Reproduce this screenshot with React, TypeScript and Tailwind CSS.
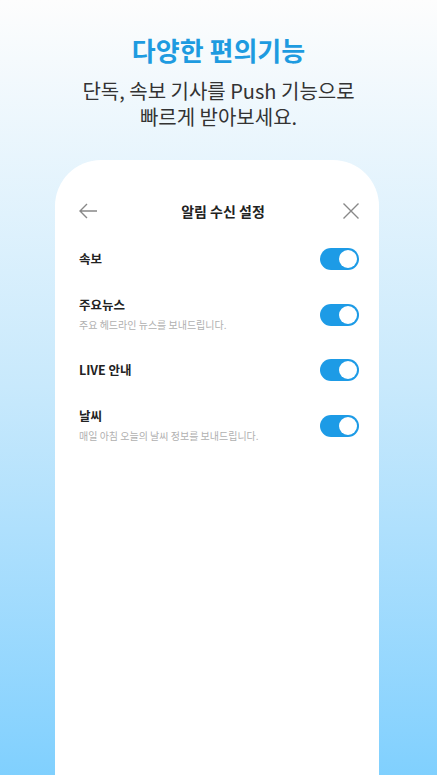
import React from "react";

const Toggle = () => (
  <div className="w-[39px] h-[22px] rounded-full bg-[#1d9be6] flex items-center justify-end pr-[2px] shrink-0">
    <div className="w-[18px] h-[18px] rounded-full bg-white" />
  </div>
);

const Row = ({ title, sub }: { title: string; sub?: string }) => (
  <div className="flex items-center justify-between">
    <div className="flex flex-col">
      <div className="text-[12.5px] leading-[18px] font-bold text-[#222]">{title}</div>
      {sub && <div className="mt-[3px] text-[10px] leading-[16px] text-[#b0b0b0]">{sub}</div>}
    </div>
    <Toggle />
  </div>
);

export default function App() {
  return (
    <div
      className="w-[437px] h-[775px] overflow-hidden flex flex-col items-center bg-linear-to-b from-[#fdfdfd] via-[#c8e9fc] to-[#80d0fe]"
      style={{ fontFamily: '"Noto Sans CJK KR", "Noto Sans", sans-serif' }}
    >
      <div className="pt-[34px] text-[26px] leading-[32px] font-bold text-[#1e9be0]">
        다양한 편의기능
      </div>
      <div className="mt-[12px] text-[20px] leading-[26px] text-[#333] text-center">
        <div>단독, 속보 기사를 Push 기능으로</div>
        <div>빠르게 받아보세요.</div>
      </div>
      <div className="mt-[30px] self-start ml-[55px] w-[324px] h-[700px] shrink-0 bg-white rounded-t-[46px] pt-[38px] pr-[20px] pl-[24px]">
        <div className="h-[26px] flex items-center justify-between">
          <svg width="20" height="16" viewBox="0 0 20 16" className="-ml-[1px]">
            <path d="M19 8H2M9 1L2 8l7 7" fill="none" stroke="#888" strokeWidth="1.4" />
          </svg>
          <div className="text-[14px] font-bold text-[#222] ml-[6px]">알림 수신 설정</div>
          <svg width="18" height="18" viewBox="0 0 18 18" className="mr-[-1px]">
            <path d="M1.5 1.5l15 15M16.5 1.5l-15 15" fill="none" stroke="#888" strokeWidth="1.4" />
          </svg>
        </div>
        <div className="mt-[24px] flex flex-col gap-[26px]">
          <Row title="속보" />
          <Row title="주요뉴스" sub="주요 헤드라인 뉴스를 보내드립니다." />
          <Row title="LIVE 안내" />
          <Row title="날씨" sub="매일 아침 오늘의 날씨 정보를 보내드립니다." />
        </div>
      </div>
    </div>
  );
}
